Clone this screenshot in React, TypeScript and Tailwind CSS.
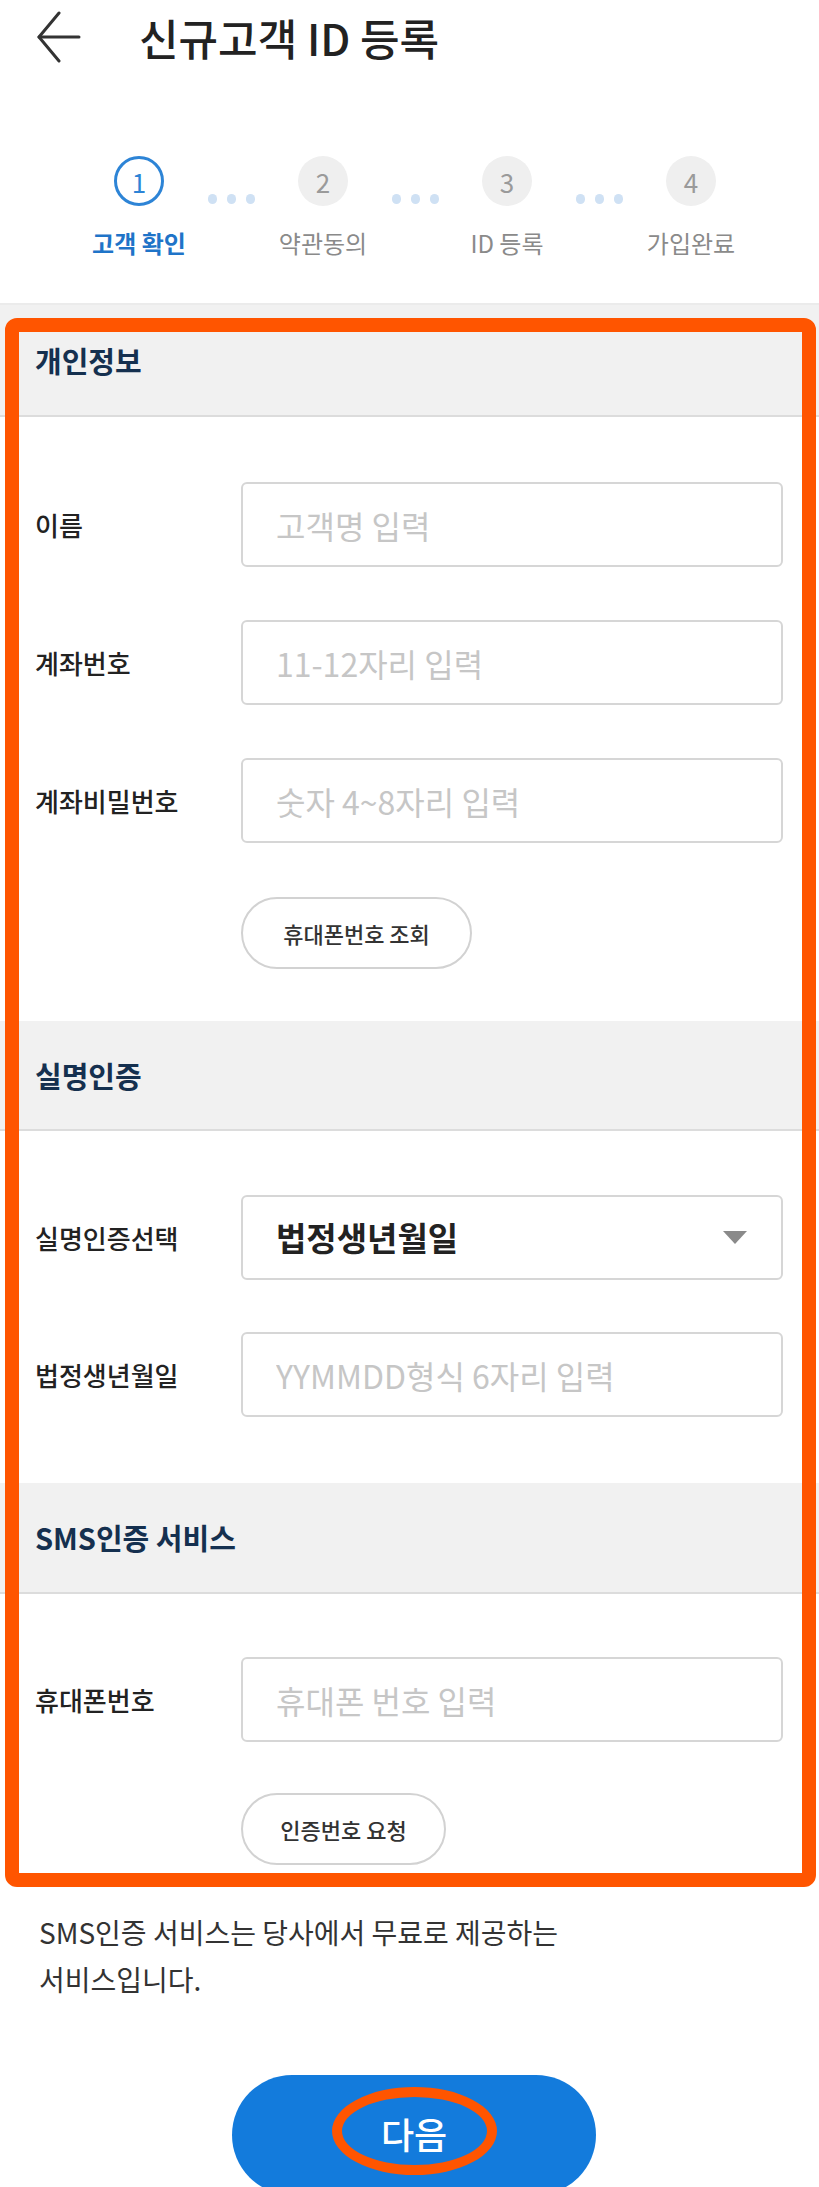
import React from "react";

const steps = [
  { n: "1", label: "고객 확인", active: true },
  { n: "2", label: "약관동의", active: false },
  { n: "3", label: "ID 등록", active: false },
  { n: "4", label: "가입완료", active: false },
];

function Dots() {
  return (
    <div className="w-[134px] h-[50px] flex items-end justify-center gap-[10px] pb-[2px]">
      <div className="w-[9px] h-[10px] rounded-full bg-[#cfe1f4]" />
      <div className="w-[9px] h-[10px] rounded-full bg-[#cfe1f4]" />
      <div className="w-[9px] h-[10px] rounded-full bg-[#cfe1f4]" />
    </div>
  );
}

function SectionHeader({ title, h }: { title: string; h: string }) {
  return (
    <div className={`${h} bg-[#f1f1f1] border-b-2 border-[#dcdcdc] flex items-center px-[35px]`}>
      <h2 className="text-[29px] font-bold text-[#15304f] leading-none">{title}</h2>
    </div>
  );
}

function Field({ label, placeholder }: { label: string; placeholder: string }) {
  return (
    <div className="flex items-center h-[85px]">
      <span className="w-[206px] text-[26px] font-medium text-[#222]">{label}</span>
      <input
        readOnly
        placeholder={placeholder}
        className="flex-1 h-full rounded-[6px] border-2 border-[#d6d6d6] px-[33px] text-[32px] outline-none placeholder:text-[#c6c6c6]"
      />
    </div>
  );
}

function PillButton({ text, w }: { text: string; w: string }) {
  return (
    <button className={`${w} ml-[206px] h-[72px] rounded-full border-2 border-[#d2d2d2] bg-white text-[22px] font-medium text-[#333]`}>
      {text}
    </button>
  );
}

export default function App() {
  return (
    <div className="relative w-[819px] h-[2187px] overflow-hidden bg-white font-['Noto_Sans_CJK_KR','Noto_Sans',sans-serif]">
      {/* header */}
      <header className="h-[74px] flex items-center pl-[37px]">
        <svg width="44" height="52" viewBox="0 0 44 52" fill="none" stroke="#333" strokeWidth="3" strokeLinecap="round" strokeLinejoin="round">
          <path d="M42 26 H2" />
          <path d="M22 2 L2 26 L22 50" />
        </svg>
        <h1 className="ml-[58px] text-[43px] font-medium text-[#222] leading-none">신규고객 ID 등록</h1>
      </header>

      {/* stepper */}
      <div className="mt-[82px] pl-[114px] flex items-center">
        {steps.map((s, i) => (
          <React.Fragment key={s.n}>
            {s.active ? (
              <div className="w-[50px] h-[50px] rounded-full border-[3px] border-[#2d84d6] bg-white flex items-center justify-center text-[26px] text-[#2d84d6]">
                {s.n}
              </div>
            ) : (
              <div className="w-[50px] h-[50px] rounded-full bg-[#efefef] flex items-center justify-center text-[26px] text-[#9a9a9a]">
                {s.n}
              </div>
            )}
            {i < steps.length - 1 && <Dots />}
          </React.Fragment>
        ))}
      </div>
      <div className="mt-[22px] pl-[47px] flex">
        {steps.map((s) => (
          <div
            key={s.n}
            className={`w-[184px] text-center text-[24px] leading-[30px] ${s.active ? "text-[#1f74c8] font-bold" : "text-[#8a8a8a]"}`}
          >
            {s.label}
          </div>
        ))}
      </div>
      <div className="mt-[45px] h-[2px] bg-[#ebebeb]" />

      {/* 개인정보 */}
      <SectionHeader title="개인정보" h="h-[112px]" />
      <div className="pt-[65px] pb-[52px] pl-[35px] pr-[36px] flex flex-col">
        <div className="flex flex-col gap-[53px]">
          <Field label="이름" placeholder="고객명 입력" />
          <Field label="계좌번호" placeholder="11-12자리 입력" />
          <Field label="계좌비밀번호" placeholder="숫자 4~8자리 입력" />
        </div>
        <div className="mt-[54px]">
          <PillButton text="휴대폰번호 조회" w="w-[231px]" />
        </div>
      </div>

      {/* 실명인증 */}
      <SectionHeader title="실명인증" h="h-[110px]" />
      <div className="pt-[64px] pb-[66px] pl-[35px] pr-[36px] flex flex-col gap-[52px]">
        <div className="flex items-center h-[85px]">
          <span className="w-[206px] text-[26px] font-medium text-[#222]">실명인증선택</span>
          <div className="flex-1 h-full rounded-[6px] border-2 border-[#d6d6d6] pl-[33px] pr-[34px] flex items-center justify-between">
            <span className="text-[33px] font-bold text-[#222]">법정생년월일</span>
            <svg width="24" height="13" viewBox="0 0 24 13">
              <path d="M0 0 H24 L12 13 Z" fill="#8a8a8a" />
            </svg>
          </div>
        </div>
        <Field label="법정생년월일" placeholder="YYMMDD형식 6자리 입력" />
      </div>

      {/* SMS인증 서비스 */}
      <SectionHeader title="SMS인증 서비스" h="h-[111px]" />
      <div className="pt-[63px] pl-[35px] pr-[36px] flex flex-col">
        <Field label="휴대폰번호" placeholder="휴대폰 번호 입력" />
        <div className="mt-[51px]">
          <PillButton text="인증번호 요청" w="w-[205px]" />
        </div>
      </div>

      {/* note */}
      <p className="mt-[44px] px-[39px] text-[28px] leading-[47px] text-[#333]">
        SMS인증 서비스는 당사에서 무료로 제공하는
        <br />
        서비스입니다.
      </p>

      {/* next button */}
      <button className="mt-[72px] ml-[232px] w-[364px] h-[120px] rounded-full bg-[#137bdc] text-white text-[36px] font-medium flex items-center justify-center pb-[4px]">
        다음
      </button>

      {/* annotation overlays */}
      <div className="absolute left-[5px] top-[318px] w-[811px] h-[1569px] border-[14px] border-[#ff5500] rounded-[12px] pointer-events-none" />
      <div className="absolute left-[332px] top-[2087px] w-[165px] h-[88px] border-[10px] border-[#ff5500] rounded-[50%] pointer-events-none" />
    </div>
  );
}
